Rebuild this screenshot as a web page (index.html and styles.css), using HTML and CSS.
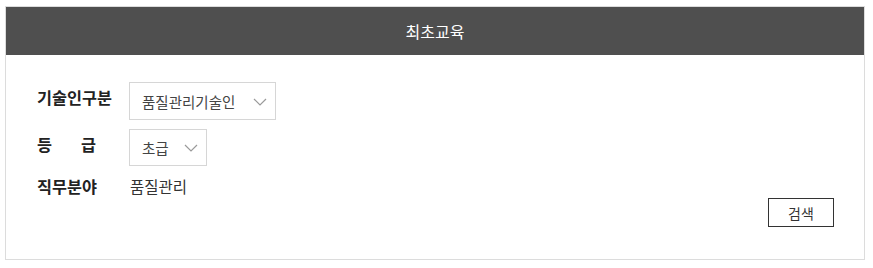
FILE: index.html
```html
<!DOCTYPE html>
<html lang="ko">
<head>
<meta charset="utf-8">
<link rel="stylesheet" href="styles.css">
</head>
<body>
<div class="panel">
  <div class="panel-head">최초교육</div>
  <div class="panel-body">
    <div class="row">
      <div class="label">기술인구분</div>
      <div class="select sel-wide"><span>품질관리기술인</span><svg class="chev" width="14" height="8" viewBox="0 0 14 8"><path d="M1 1 L7 7 L13 1" fill="none" stroke="#9a9a9a" stroke-width="1.2"/></svg></div>
    </div>
    <div class="row">
      <div class="label label-split"><span>등</span><span>급</span></div>
      <div class="select sel-narrow"><span>초급</span><svg class="chev" width="14" height="8" viewBox="0 0 14 8"><path d="M1 1 L7 7 L13 1" fill="none" stroke="#9a9a9a" stroke-width="1.2"/></svg></div>
    </div>
    <div class="row row-text">
      <div class="label">직무분야</div>
      <div class="value">품질관리</div>
    </div>
    <div class="actions">
      <button class="btn">검색</button>
    </div>
  </div>
</div>
</body>
</html>
```
FILE: styles.css
```css
html, body { margin: 0; padding: 0; background: #fff; }
body {
  padding: 6px 9px 0 5px;
  font-family: "Noto Sans CJK KR", "Noto Sans", sans-serif;
  color: #333;
}
.panel {
  border: 1px solid #dcdcdc;
  box-sizing: border-box;
  width: 860px;
  height: 254px;
}
.panel-head {
  background: #4f4f4f;
  color: #fff;
  height: 48px;
  display: flex;
  align-items: center;
  justify-content: center;
  font-size: 16px;
  padding-bottom: 1px;
  box-sizing: border-box;
}
.panel-body {
  padding: 27px 30px 0 31px;
}
.row {
  display: flex;
  align-items: center;
  margin-bottom: 9px;
}
.label {
  width: 75px;
  margin-right: 17px;
  font-size: 16.3px;
  font-weight: bold;
  color: #222;
  margin-top: -8px;
  white-space: nowrap;
}
.label-split {
  display: flex;
  justify-content: space-between;
  width: 59px;
  margin-right: 33px;
}
.select {
  height: 38px;
  box-sizing: border-box;
  border: 1px solid #d6d6d6;
  display: flex;
  align-items: center;
  padding-left: 12px;
  font-size: 14.5px;
  color: #444;
}
.sel-wide { width: 147px; }
.sel-narrow { width: 78px; height: 37px; }
.chev { margin-left: auto; margin-right: 8px; margin-top: 1px; flex-shrink: 0; }
.row-text { height: 22px; margin-top: 0; margin-bottom: 0; }
.row-text .label { margin-top: 0; margin-right: 18px; }
.value { font-size: 15.5px; color: #333; }
.actions {
  display: flex;
  justify-content: flex-end;
  margin-top: 1px;
}
.btn {
  width: 66px;
  height: 29px;
  border: 1px solid #333;
  background: #fff;
  font-family: inherit;
  font-size: 14px;
  color: #333;
  padding: 0;
}
```
